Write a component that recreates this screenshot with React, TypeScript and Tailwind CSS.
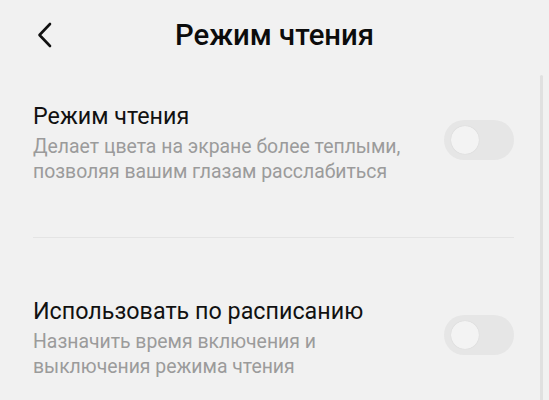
type SettingProps = {
  title: string;
  description: string;
  enabled?: boolean;
};

// Toggle in the off state: pale track with the knob on the left
function Toggle({ enabled = false }: { enabled?: boolean }) {
  return (
    <div
      className={`mb-[5px] flex h-[40px] w-[70px] shrink-0 items-center rounded-full px-[7px] ${
        enabled ? 'justify-end bg-[#3482ff]' : 'justify-start bg-[#e6e6e6]'
      }`}
    >
      <div className="h-[28px] w-[28px] rounded-full bg-[#f3f3f3] shadow-[0_0_1px_rgba(0,0,0,0.15)]" />
    </div>
  );
}

function SettingRow({ title, description, enabled }: SettingProps) {
  return (
    <div className="flex items-center justify-between gap-4">
      <div className="max-w-[385px]">
        <div className="text-[23.3px] leading-[30px] text-[#111]">{title}</div>
        <div className="mt-[4px] text-[19.4px] leading-[24.5px] text-[#9b9b9b]">{description}</div>
      </div>
      <Toggle enabled={enabled} />
    </div>
  );
}

export default function App() {
  return (
    <div className="relative h-[400px] w-[549px] overflow-hidden bg-[#f1f1f1] font-['Roboto',sans-serif]">
      {/* header */}
      <div className="grid grid-cols-[1fr_auto_1fr] items-center px-[37px] pt-[17px]">
        <button className="flex items-center text-[#111]">
          <svg width="16" height="26" viewBox="0 0 16 26" fill="none">
            <path d="M13 2 L2.5 13 L13 24" stroke="currentColor" strokeWidth="2.6" strokeLinecap="round" strokeLinejoin="round" />
          </svg>
        </button>
        <h1 className="text-[29.3px] font-medium leading-[36px] text-[#0c0c0c]">Режим чтения</h1>
        <div />
      </div>

      <div className="pl-[33px] pr-[35px] pt-[48px]">
        <SettingRow
          title="Режим чтения"
          description="Делает цвета на экране более теплыми, позволяя вашим глазам расслабиться"
        />
        <div className="mt-[53px] h-px bg-[#e4e4e4]" />
        <div className="pt-[58px]">
          <SettingRow
            title="Использовать по расписанию"
            description="Назначить время включения и выключения режима чтения"
          />
        </div>
      </div>

      {/* scroll indicator */}
      <div className="absolute right-[6px] top-[75px] h-[330px] w-[3px] rounded-full bg-[#e0e0e0]" />
    </div>
  );
}
